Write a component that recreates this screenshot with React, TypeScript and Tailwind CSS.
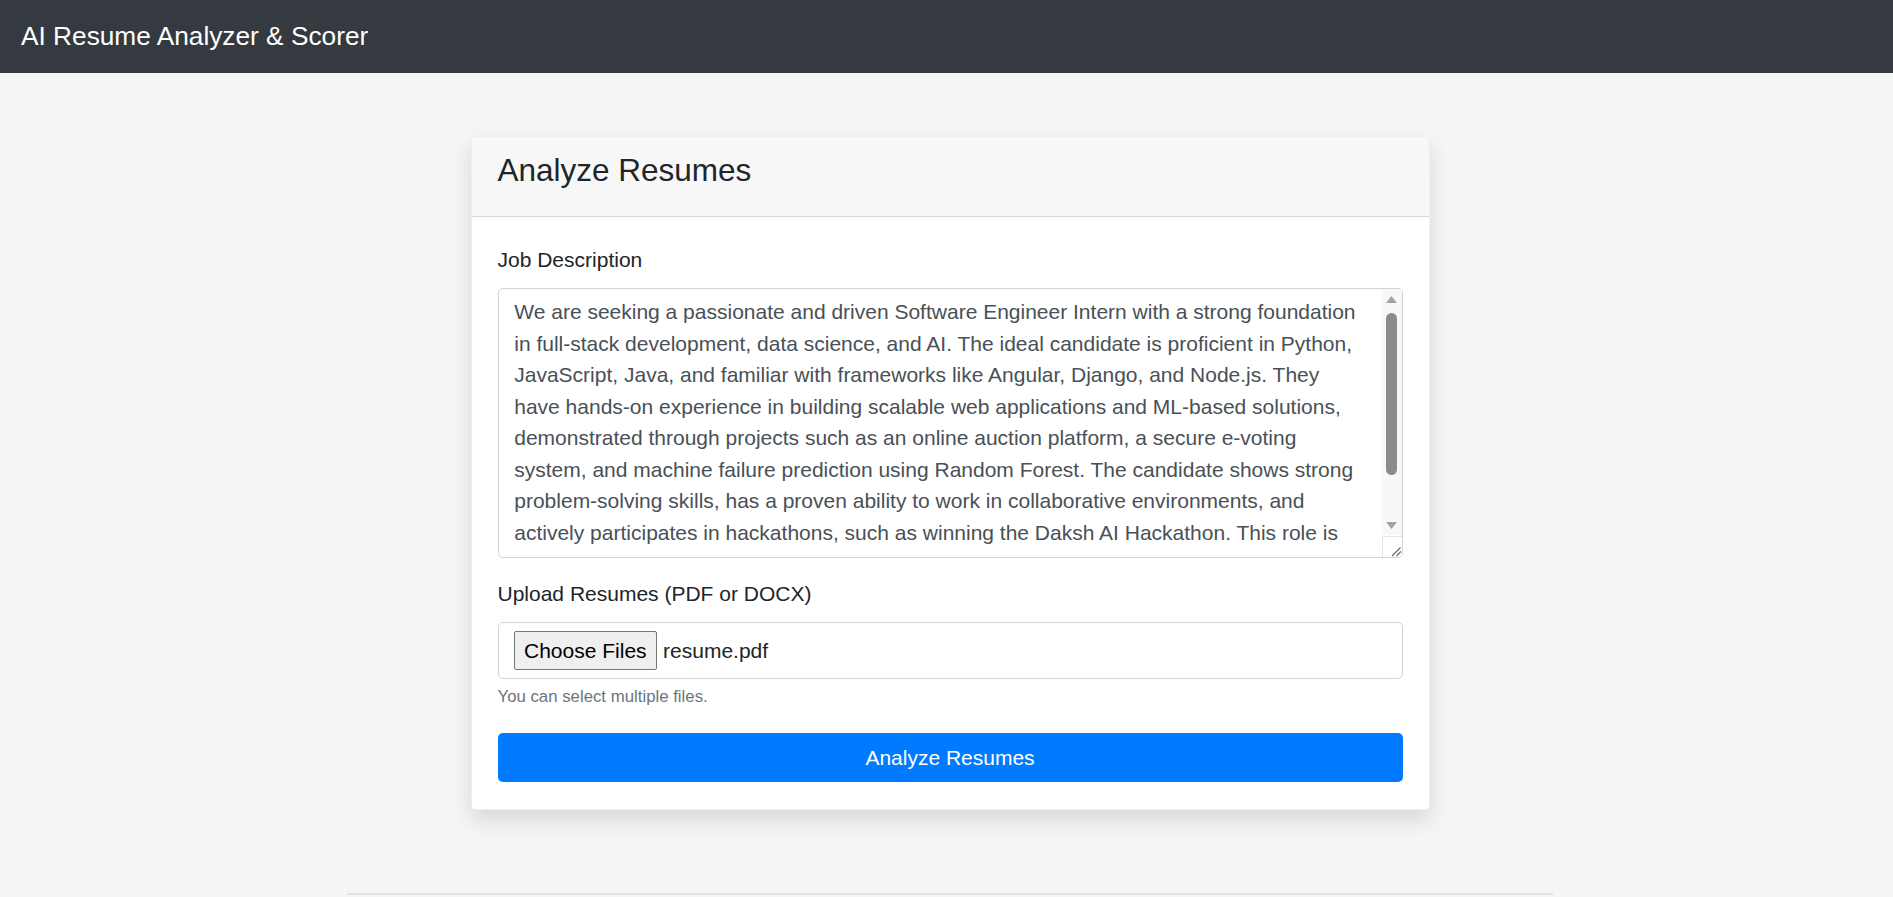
import React from "react";

const JOB_TEXT =
  "We are seeking a passionate and driven Software Engineer Intern with a strong foundation in full-stack development, data science, and AI. The ideal candidate is proficient in Python, JavaScript, Java, and familiar with frameworks like Angular, Django, and Node.js. They have hands-on experience in building scalable web applications and ML-based solutions, demonstrated through projects such as an online auction platform, a secure e-voting system, and machine failure prediction using Random Forest. The candidate shows strong problem-solving skills, has a proven ability to work in collaborative environments, and actively participates in hackathons, such as winning the Daksh AI Hackathon. This role is ideal for someone eager to contribute to innovative products and grow in a fast-paced environment.";

function FakeScrollbar() {
  return (
    <>
      {/* scrollbar track */}
      <div className="absolute top-0 right-0 w-[20px] h-[246px] bg-[#f8f8f8] flex flex-col items-center">
        <svg width="11" height="7" viewBox="0 0 11 7" className="mt-[7px]">
          <path d="M5.5 0 L11 7 L0 7 Z" fill="#a3a3a3" />
        </svg>
        <div className="mt-[10px] w-[11px] h-[162px] rounded-full bg-[#8b8b8b]" />
        <svg width="11" height="7" viewBox="0 0 11 7" className="mt-[47px]">
          <path d="M0 0 L11 0 L5.5 7 Z" fill="#a3a3a3" />
        </svg>
      </div>
      {/* resize corner */}
      <div className="absolute right-0 bottom-0 w-[20px] h-[21px] bg-white border-t border-l border-[#e4e4e4]">
        <svg width="20" height="20" viewBox="0 0 20 20" className="absolute left-0 top-0">
          <path d="M9 19 L17.5 10.5 M13.5 19 L18 14.5" stroke="#666" strokeWidth="1.1" />
        </svg>
      </div>
    </>
  );
}

export default function App() {
  return (
    <div className="min-h-screen bg-[#f4f5f5] font-['Liberation_Sans',Arial,sans-serif] text-[#212529]">
      <nav className="h-[73px] bg-[#343a40] flex items-center px-[21px]">
        <span className="text-white text-[26.25px] leading-none">AI Resume Analyzer &amp; Scorer</span>
      </nav>

      <main className="flex flex-col items-center pl-[7px]">
        <div className="mt-[63px] w-[959px] rounded-[5px] bg-white border border-black/[0.06] shadow-[0_10px_21px_rgba(0,0,0,0.12)] overflow-hidden">
          <div className="h-[80px] bg-[#f7f7f7] border-b border-black/[0.13] px-[26px] pt-[15px]">
            <h4 className="text-[31.5px] leading-[1.2]">Analyze Resumes</h4>
          </div>

          <div className="px-[26px] pt-[27px] pb-[27px]">
            <label className="block text-[21px] leading-[31.5px] mb-[12px]">Job Description</label>
            <div className="relative h-[270px] border border-[#ced4da] rounded-[5px] bg-white pl-[15.75px] pr-[35px] py-[7.875px] overflow-hidden">
              <textarea
                className="block w-full h-[252px] p-0 resize-none overflow-hidden bg-transparent text-[#495057] text-[21px] leading-[31.5px] outline-none"
                defaultValue={JOB_TEXT}
              />
              <FakeScrollbar />
            </div>

            <label className="block mt-[20px] text-[21px] leading-[31.5px] mb-[13px]">Upload Resumes (PDF or DOCX)</label>
            <div className="h-[57px] border border-[#ced4da] rounded-[5px] bg-white flex items-center px-[15px] gap-[6px]">
              <button className="h-[39px] px-[9.5px] bg-[#efefef] border border-[#767676] rounded-[2px] text-black text-[21px] leading-none">
                Choose Files
              </button>
              <span className="text-[21px] text-[#212529]">resume.pdf</span>
            </div>
            <p className="mt-[5px] text-[16.8px] leading-[25px] text-[#6c757d]">You can select multiple files.</p>

            <button className="mt-[24px] w-full h-[49px] rounded-[5px] bg-[#007bff] text-white text-[21px] leading-[31.5px]">
              Analyze Resumes
            </button>
          </div>
        </div>

        <hr className="mt-[83px] w-[1206px] border-0 border-t-2 border-[#dfe1e1]" />
      </main>
    </div>
  );
}
